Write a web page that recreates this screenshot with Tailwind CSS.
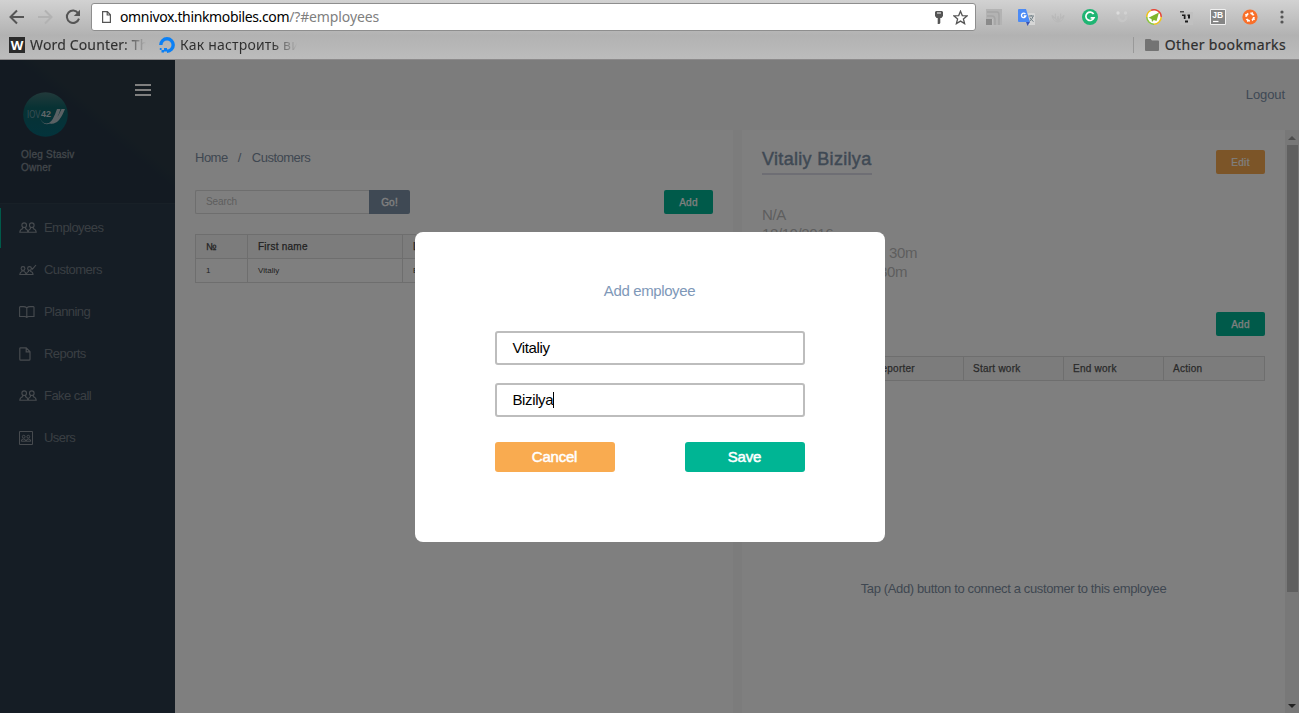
<!DOCTYPE html>
<html lang="en">
<head>
<meta charset="utf-8">
<title>Employees</title>
<script src="https://cdn.jsdelivr.net/npm/@tailwindcss/browser@4"></script>
</head>
<body class="w-[1299px] h-[713px] overflow-hidden flex flex-col bg-white font-['Liberation_Sans',Arial,sans-serif]">

<!-- Browser chrome -->
<header class="h-[60px] shrink-0 flex flex-col bg-linear-to-b from-[#d2d2d2] via-[#b2b2b2] via-60% to-[#bcbcbc] border-b border-[#8c8a8b] font-['Noto_Sans',sans-serif]">
  <div class="h-[33px] flex items-center pl-[9px]">
    <svg class="w-[16px] h-[16px] shrink-0" viewBox="0 0 16 16" fill="none" stroke="#555" stroke-width="2"><path d="M15 8H2M8 1.5L1.5 8L8 14.5"/></svg>
    <svg class="w-[16px] h-[16px] shrink-0 ml-[12px]" viewBox="0 0 16 16" fill="none" stroke="#b2b2b2" stroke-width="2"><path d="M1 8H14M8 1.5L14.5 8L8 14.5"/></svg>
    <svg class="w-[16px] h-[16px] shrink-0 ml-[12px]" viewBox="0 0 16 16"><path d="M13.2 4.2A6.2 6.2 0 1 0 14 9.6" fill="none" stroke="#555" stroke-width="2"/><path d="M15 0.8V7H8.8Z" fill="#555"/></svg>
    <div class="ml-[10px] mt-[1px] w-[885px] h-[28px] shrink-0 flex items-center rounded-[3px] border border-[#8e8e8e] bg-white pl-[10px] pr-[7px]">
      <svg class="w-[9px] h-[12px] shrink-0" viewBox="0 0 9 12" fill="none" stroke="#555" stroke-width="1.2"><path d="M.6.6H5.4L8.4 3.8V11.4H.6ZM5.2.8V4H8.2"/></svg>
      <span class="ml-[9px] text-[14px] leading-[20px] whitespace-nowrap text-black tracking-[-0.36px]">omnivox.thinkmobiles.com<span class="text-[#808080] tracking-[-0.12px]">/?#employees</span></span>
      <svg class="ml-auto w-[8px] h-[13px] shrink-0" viewBox="0 0 8 13" fill="#555"><path fill-rule="evenodd" d="M1 0H7L8 1V5L6.5 7H5.3V12L4.4 13H2.7V7H1.5L0 5V1ZM2 1.4V2.4H6V1.4Z"/></svg>
      <svg class="ml-[10px] w-[15px] h-[15px] shrink-0" viewBox="0 0 15 15" fill="none" stroke="#555" stroke-width="1.3"><path d="M7.5 1.2L9.3 5.6L14 5.9L10.4 9L11.6 13.6L7.5 11.1L3.4 13.6L4.6 9L1 5.9L5.7 5.6Z"/></svg>
    </div>
    <div class="ml-[2px] w-[320px] grid grid-cols-10 place-items-center mt-[1px]">
      <svg class="w-[18px] h-[16px]" viewBox="0 0 18 16"><path d="M1 0H17V16H8V10H1Z" fill="#b3b3b3"/><path d="M2 3H12Q14 3 14 6V16M2 7H7Q10 7 10 11V16" fill="none" stroke="#a5a5a5" stroke-width="1.600"/><path d="M1 10H7V16H1Z" fill="#8a8a8a"/></svg>
      <svg class="w-[17px] h-[17px]" viewBox="0 0 17 17"><path d="M6 4H16Q17 4 17 5V16H9Z" fill="#d6d6d6"/><path d="M8 13H12L9.5 17Z" fill="#3a54b4"/><path d="M1 0H8L12 13H1Q0 13 0 12V1Q0 0 1 0Z" fill="#4c8bf5"/><path d="M7.400 5A2.200 2.200 0 1 0 7.800 7H5.800" fill="none" stroke="#fff" stroke-width="1.300"/><path d="M10.5 7H16M13.2 6V7.2M15 7.4Q14 11 11.5 12.2M12 8.6Q13 11 15.5 12.5" fill="none" stroke="#6f7f86" stroke-width="1"/></svg>
      <svg class="w-[14px] h-[12px]" viewBox="0 0 16 14" fill="none" stroke="#b9b9b9" stroke-width="1.300"><path d="M1 5Q2 12 8 13Q14 12 15 5M5 3Q4 10 8 12Q12 10 11 3M1 5L7 11L8 6L9 11L15 5"/></svg>
      <svg class="w-[16px] h-[16px]" viewBox="0 0 16 16"><circle cx="8" cy="8" r="8" fill="#1fb573"/><path d="M11.600 5A4.200 4.200 0 1 0 12 8.800H8.600" fill="none" stroke="#fff" stroke-width="1.700"/></svg>
      <svg class="w-[14px] h-[14px]" viewBox="0 0 14 14"><circle cx="3" cy="3" r="1.700" fill="#dcdcdc"/><circle cx="10.500" cy="3" r="1.700" fill="#d2d2d2"/><path d="M3.500 6.500Q4 11 7.500 11Q11 11 11.500 6" fill="none" stroke="#c6c6c6" stroke-width="2.400"/></svg>
      <svg class="w-[16px] h-[16px]" viewBox="0 0 16 16"><circle cx="8" cy="8" r="7.200" fill="#fff"/><g fill="none" stroke-width="1.500"><path d="M5 1.400A7.200 7.200 0 0 1 15.200 8" stroke="#e5493a"/><path d="M15.200 8A7.200 7.200 0 0 1 8 15.200" stroke="#f0c419"/><path d="M8 15.200A7.200 7.200 0 0 1 .8 8" stroke="#8cc63f"/><path d="M.8 8A7.200 7.200 0 0 1 5 1.400" stroke="#f0c419"/></g><path d="M13 3.500L2.500 8.800L5.500 10L6 13L7.800 11L10.500 12Z" fill="#7fb52c"/></svg>
      <svg class="w-[14px] h-[15px]" viewBox="0 0 14 15"><path d="M1 2H14V15H1Z" fill="#c0c0c0"/><path d="M1 1H5V2.500H1Z" fill="#4a4a4a"/><path d="M3 4.500H6.500V9H4.800V6H3ZM8.500 4.500H11V8.500H9V6H8.500ZM6 10.500H9V12.500H6Z" fill="#1b1b1b"/></svg>
      <svg class="w-[16px] h-[16px]" viewBox="0 0 16 16"><path d="M.5.5H15.5V15.5H.5Z" fill="#858585" stroke="#f0f0f0"/><path d="M3 12.5H8.5" stroke="#fff" stroke-width="1.2"/><text x="2.2" y="9" font-family="Liberation Sans" font-weight="700" font-size="8.5" fill="#fff">JB</text></svg>
      <svg class="w-[16px] h-[16px]" viewBox="0 0 16 16"><circle cx="8" cy="8" r="7.600" fill="#f9702a"/><circle cx="8" cy="8" r="3.900" fill="none" stroke="#fff" stroke-width="1.900" stroke-dasharray="3.900 2.226"/><path d="M3.200 5.500L5.200 6.500M10.500 3.200L9.500 5.200M12.800 10.500L10.800 9.500M5.500 12.800L6.500 10.800" stroke="#fff" stroke-width="1.200"/></svg>
      <svg class="w-[10px] h-[14px]" viewBox="0 0 10 14" fill="#555"><circle cx="5" cy="2" r="1.6"/><circle cx="5" cy="7" r="1.6"/><circle cx="5" cy="12" r="1.6"/></svg>
    </div>
  </div>
  <div class="h-[24px] flex items-center pl-[9px] pr-[13px] text-[14px] leading-[20px] text-[#333] whitespace-nowrap">
    <span class="w-[16px] h-[16px] shrink-0 bg-[#2b2b2b] text-white font-bold text-[13px] leading-[16px] text-center">W</span>
    <span class="ml-[5px] w-[116px] overflow-hidden bg-linear-to-r from-[#2e2e2e] from-80% to-[#b4b4b4] bg-clip-text text-transparent tracking-[0.15px] [-webkit-text-stroke:0.15px_transparent]">Word Counter: Th</span>
    <svg class="ml-[13px] w-[16px] h-[16px] shrink-0" viewBox="0 0 16 16"><path d="M8 14.2A6.2 6.2 0 1 0 1.8 8" fill="none" stroke="#0b80f5" stroke-width="3.4"/><path d="M5 11H8V14.5H5ZM2.5 13H5V15.5H2.5ZM.8 11H2.6V13H.8Z" fill="#0b80f5"/></svg>
    <span class="ml-[5px] w-[117px] overflow-hidden bg-linear-to-r from-[#2e2e2e] from-78% to-[#b4b4b4] bg-clip-text text-transparent tracking-[0.18px]">Как настроить ви</span>
    <span class="ml-auto w-px h-[16px] bg-[#999]"></span>
    <svg class="ml-[11px] w-[14px] h-[12px] shrink-0" viewBox="0 0 14 12" fill="#737373"><path d="M1 0H5.5L7 1.6H13Q14 1.6 14 2.6V11Q14 12 13 12H1Q0 12 0 11V1Q0 0 1 0Z"/></svg>
    <span class="ml-[6px] text-[#2e2e2e] tracking-[0.36px] [-webkit-text-stroke:0.2px_#2e2e2e]">Other bookmarks</span>
  </div>
</header>

<div class="relative h-[653px] flex">
  <!-- Sidebar -->
  <aside class="w-[175px] shrink-0 bg-[#2a3a4a] flex flex-col text-white">
    <div class="h-[144px] border-b border-[#31414f] bg-linear-to-tr from-[#263545] from-55% to-[#2a3944] to-60% flex justify-between items-start">
      <div class="pl-[21px] pt-[32px]">
        <svg class="ml-[2px] w-[45px] h-[45px]" viewBox="0 0 45 45">
          <defs><linearGradient id="logo" x1="0" y1="0" x2="0" y2="1"><stop offset="0" stop-color="#457476"/><stop offset=".35" stop-color="#0f6468"/><stop offset="1" stop-color="#076678"/></linearGradient></defs>
          <circle cx="22.5" cy="22.5" r="22.3" fill="url(#logo)"/>
          <text x="4" y="25.500" font-family="Liberation Sans" font-size="10" textLength="13.500" lengthAdjust="spacingAndGlyphs" fill="#6f9aa8">IOV<tspan font-size="8.500" font-weight="700" dy="-1" fill="#c2cdd2"></tspan></text>
          <text x="18" y="24.500" font-family="Liberation Sans" font-weight="700" font-size="9" fill="#c2cdd2">42</text>
          <path d="M17 25Q19 33 26 31Q30 29 34 17H37.500Q34 29 29 31Q19 35 17 25ZM27 32Q33 30 38.500 17H42Q38 27 34 30Q31 32 27 32Z" fill="#b5c2c8"/>
        </svg>
        <div class="mt-[11px] text-[10px] leading-[13px] text-[#858e96] tracking-[0.22px] [-webkit-text-stroke:0.3px_#858e96]">Oleg Stasiv<br>Owner</div>
      </div>
      <svg class="mr-[24px] mt-[24px] w-[16px] h-[12px]" viewBox="0 0 16 12" fill="#fff"><path d="M0 0H16V2H0ZM0 5H16V7H0ZM0 10H16V12H0Z"/></svg>
    </div>
    <svg class="hidden">
      <symbol id="people" viewBox="0 0 18 12"><g fill="none" stroke="#8f979f" stroke-width="1.1"><circle cx="5.200" cy="3.200" r="2.300"/><circle cx="12.800" cy="3.200" r="2.300"/><path d="M3.800 5.300L3.600 6.800Q1 7.500 .8 10.300H8.800Q8.800 7.500 6.600 6.800L6.500 5.300M11.500 5.300L11.400 6.800Q9.400 7.500 9.200 10.300H17.200Q17 7.500 14.400 6.800L14.200 5.300"/></g></symbol>
    </svg>
    <nav class="mt-[4px] flex flex-col gap-[2px] text-[13px] text-[#747e87] tracking-[-0.55px]">
      <a class="h-[40px] flex items-center border-l border-[#00b594] pl-[18px]"><svg class="w-[18px] h-[12px] mr-[7px]"><use href="#people"/></svg>Employees</a>
      <a class="h-[40px] flex items-center pl-[19px]"><svg class="w-[18px] h-[12px] mr-[7px]" viewBox="0 0 18 12" fill="none" stroke="#8f979f" stroke-width="1.1"><circle cx="4" cy="4.500" r="1.900"/><circle cx="10.500" cy="4.500" r="1.900"/><path d="M3 6.300V7.500Q1 8 .8 10.500H7Q7 8 5 7.500V6.300M9.500 6.300V7.500Q7.600 8 7.500 10.500H14Q14 8 11.700 7.500V6.300M12.500 4L13.500 5.200L17 1"/></svg>Customers</a>
      <a class="h-[40px] flex items-center pl-[19px]"><svg class="w-[16px] h-[12px] mr-[9px]" viewBox="0 0 16 12" fill="none" stroke="#8f979f" stroke-width="1.1"><path d="M7.800 1.800Q6 .4 4 .6H1.300Q.6.600.6 1.300V10.500H5.500Q7.200 10.500 7.800 11.500Q8.400 10.500 10 10.500H15V1.300Q15 .6 14.300.6H11Q9 .6 7.800 1.800V11"/></svg>Planning</a>
      <a class="h-[40px] flex items-center pl-[19px]"><svg class="w-[12px] h-[14px] mr-[13px]" viewBox="0 0 12 14" fill="none" stroke="#8f979f" stroke-width="1.200"><path d="M1.600.8H7.200L11 4.800V12.300Q11 13.200 10 13.200H1.700Q.8 13.200.8 12.300V1.600Q.8.800 1.600.8ZM7.200 1V4.800H11"/></svg>Reports</a>
      <a class="h-[40px] flex items-center pl-[19px]"><svg class="w-[18px] h-[12px] mr-[7px]"><use href="#people"/></svg>Fake call</a>
      <a class="h-[40px] flex items-center pl-[19px]"><svg class="w-[14px] h-[14px] mr-[11px]" viewBox="0 0 14 14" fill="none" stroke="#8f979f"><path d="M.5.5H13.500V13.500H.5Z"/><g><circle cx="4.700" cy="5.700" r="1.400"/><circle cx="9.300" cy="5.700" r="1.400"/><path d="M2.200 10.200Q2.200 8 4.500 8Q6.800 8 6.800 10.200ZM7.200 10.200Q7.200 8 9.500 8Q11.800 8 11.800 10.200Z"/></g></svg>Users</a>
    </nav>
  </aside>

  <!-- Main area -->
  <main class="flex-1 flex flex-col bg-[#f9f9f9]">
    <div class="h-[70px] flex items-center justify-end pr-[14px] text-[13px] text-[#7e92aa] tracking-[-0.1px]">Logout</div>
    <div class="h-[583px] flex">
      <section class="w-[558px] bg-white px-[20px] pt-[20px]">
        <div class="h-[16px] flex items-center text-[13px] text-[#7e8fa3] tracking-[-0.5px]"><span>Home</span><span class="ml-[10px] mr-[11px]">/</span><span>Customers</span></div>
        <div class="mt-[24px] flex h-[24px]">
          <div class="w-[174px] border border-r-0 border-[#dcdcdc] rounded-l-[2px] pl-[10px] text-[10px] leading-[22px] text-[#bdbdbd] tracking-[-0.1px]">Search</div>
          <div class="w-[41px] bg-[#7e92a8] rounded-r-[2px] text-center text-[10px] leading-[25px] text-white tracking-[0.2px] [-webkit-text-stroke:0.35px_#fff]">Go!</div>
          <div class="ml-auto w-[49px] bg-[#00b594] rounded-[2px] text-center text-[10px] leading-[25px] text-white tracking-[0.3px] [-webkit-text-stroke:0.25px_#fff]">Add</div>
        </div>
        <div class="mt-[20px] w-[518px] border border-[#dcdcdc] text-[#444]">
          <div class="flex h-[24px] bg-[#f9f9f9] border-b border-[#dcdcdc] text-[10px] leading-[23px] tracking-[0.25px] [-webkit-text-stroke:0.25px_#444]">
            <div class="w-[52px] border-r border-[#dcdcdc] pl-[10px]">№</div><div class="w-[155px] border-r border-[#dcdcdc] pl-[10px]">First name</div><div class="pl-[10px]">Last name</div>
          </div>
          <div class="flex h-[23px] text-[8px] leading-[23px]">
            <div class="w-[52px] border-r border-[#dcdcdc] pl-[10px]">1</div><div class="w-[155px] border-r border-[#dcdcdc] pl-[10px]">Vitaliy</div><div class="pl-[10px]">Bizilya</div>
          </div>
        </div>
      </section>
      <section class="ml-[9px] w-[543px] bg-white px-[20px] pt-[17px] flex flex-col">
        <div class="flex justify-between items-start">
          <h1 class="h-[28px] border-b-2 border-[#dcdce8] text-[18px] leading-[24px] text-[#7e92a8] tracking-[0.32px] [-webkit-text-stroke:0.45px_#7e92a8]">Vitaliy Bizilya</h1>
          <div class="mt-[3px] w-[49px] h-[24px] bg-[#f9ab50] rounded-[2px] text-center text-[10px] leading-[25px] text-white tracking-[0.3px] [-webkit-text-stroke:0.2px_#fff]">Edit</div>
        </div>
        <div class="mt-[30px] text-[15px] leading-[19px] text-[#bdbdbd] tracking-[-0.4px]">
          <div>N/A</div><div>18/10/2016</div><div class="w-[155px] text-right">Planned: 8h 30m</div><div class="w-[145px] text-right">Worked: 8h 30m</div>
        </div>
        <div class="mt-[31px] self-end w-[49px] h-[24px] bg-[#00b594] rounded-[2px] text-center text-[10px] leading-[25px] text-white tracking-[0.3px] [-webkit-text-stroke:0.25px_#fff]">Add</div>
        <div class="mt-[20px] w-[503px] h-[25px] flex border border-[#dcdcdc] bg-[#f9f9f9] text-[10px] leading-[23px] text-[#555] tracking-[0.25px] [-webkit-text-stroke:0.25px_#555]">
          <div class="w-[101px] border-r border-[#dcdcdc] pl-[10px]">Customer</div><div class="w-[100px] border-r border-[#dcdcdc] pl-[10px]">Reporter</div><div class="w-[100px] border-r border-[#dcdcdc] pl-[9px]">Start work</div><div class="w-[100px] border-r border-[#dcdcdc] pl-[9px]">End work</div><div class="pl-[9px]">Action</div>
        </div>
        <p class="mt-[200px] text-center text-[13px] leading-[16px] text-[#7e8fa3] tracking-[-0.37px]">Tap (Add) button to connect a customer to this employee</p>
      </section>
      <div class="w-[14px] bg-[#f1f1f1] flex flex-col items-center pt-[6px] pb-[5px]">
        <svg class="w-[8px] h-[4px]" viewBox="0 0 8 4" fill="#9a9a9a"><path d="M0 4L4 0L8 4Z"/></svg>
        <div class="mt-[5px] w-[11px] h-[447px] bg-[#c1c1c1]"></div>
        <svg class="mt-auto w-[8px] h-[4px]" viewBox="0 0 8 4" fill="#444"><path d="M0 0L4 4L8 0Z"/></svg>
      </div>
    </div>
  </main>

  <!-- Modal dialog -->
  <div class="absolute inset-0 bg-black/50">
    <div class="mx-auto mt-[172px] w-[470px] h-[310px] rounded-[8px] bg-white px-[80px] pt-[49px] flex flex-col text-[15px] tracking-[-0.38px]">
      <h2 class="text-center leading-[20px] text-[#7e98b8]">Add employee</h2>
      <div class="mt-[30px] h-[34px] border-2 border-[#bdbdbd] rounded-[3px] pl-[16px] flex items-center text-black">Vitaliy</div>
      <div class="mt-[18px] h-[34px] border-2 border-[#bdbdbd] rounded-[3px] pl-[16px] flex items-center text-black">Bizilya<span class="w-px h-[16px] bg-black"></span></div>
      <div class="mt-[25px] flex justify-between text-white leading-[30px] text-center [-webkit-text-stroke:0.5px_#fff] tracking-[-0.2px]">
        <div class="w-[120px] h-[30px] rounded-[3px] bg-[#f9ab50]">Cancel</div>
        <div class="w-[120px] h-[30px] rounded-[3px] bg-[#00b594]">Save</div>
      </div>
    </div>
  </div>
</div>
</body>
</html>
